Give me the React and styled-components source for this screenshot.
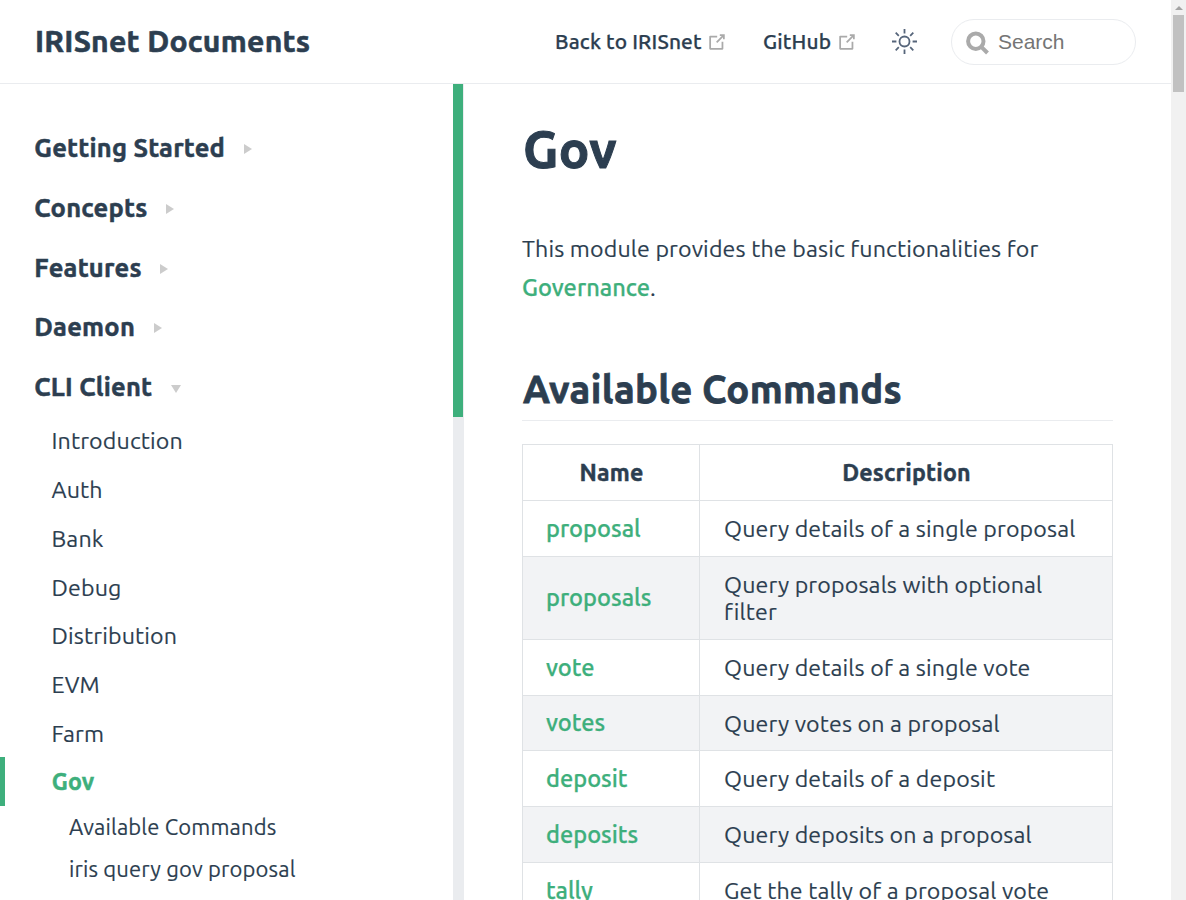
import React from "react";
import styled, { createGlobalStyle, css } from "styled-components";

const GlobalStyle = createGlobalStyle`
  * { box-sizing: border-box; }
  html, body { margin: 0; height: 900px; overflow: hidden; background: #fff; }
  body {
    font-family: Ubuntu, "Noto Sans", "Open Sans", sans-serif;
    color: #2c3e50;
    font-size: 23.2px;
    letter-spacing: 0.14px;
    -webkit-text-stroke: 0.15px currentColor;
  }
  a { color: inherit; text-decoration: none; }
`;

const strong = css`
  font-weight: 700;
  letter-spacing: 0.009em;
  -webkit-text-stroke: 0.02em currentColor;
`;

const Window = styled.div`
  display: flex;
  width: 1186px;
  height: 900px;
  overflow: hidden;
`;

const Page = styled.div`
  display: flex;
  flex-direction: column;
  width: 1171px;
  height: 900px;
`;

const Label = styled.span`
  white-space: nowrap;
`;

const Header = styled.header`
  display: flex;
  align-items: center;
  height: 84px;
  flex: none;
  padding: 0 35px;
  border-bottom: 1px solid #eaecef;
`;

const SiteName = styled.a`
  ${strong}
  flex: 1;
  font-size: 30.2px;
  line-height: 40px;
  margin-top: -2px;
  letter-spacing: 0.23px;
`;

const NavLink = styled.a`
  display: flex;
  align-items: center;
  width: ${(p) => p.$width}px;
  margin-right: ${(p) => p.$gap}px;
  font-size: 20.9px;
  font-weight: 500;
  line-height: 30px;
  justify-content: space-between;
  -webkit-text-stroke: 0.25px currentColor;
`;

const ThemeButton = styled.span`
  display: flex;
  margin-right: 33px;
`;

const SearchBox = styled.label`
  display: flex;
  align-items: center;
  gap: 7px;
  width: 185px;
  height: 46px;
  padding-left: 13px;
  border: 1px solid #eaecef;
  border-radius: 23px;
  color: #757575;
  font: 21px "Liberation Sans", Arial, sans-serif;
  letter-spacing: 0;
  -webkit-text-stroke: 0;
`;

const Body = styled.div`
  display: flex;
  height: 816px;
  overflow: hidden;
`;

const Sidebar = styled.nav`
  flex: 1 0 453px;
  width: 453px;
  padding-top: 34px;
  overflow: hidden;
`;

const SideTrack = styled.div`
  flex: none;
  width: 11px;
  height: 816px;
  background: #eaecef;
`;

const SideThumb = styled.div`
  width: 10px;
  height: 333px;
  background: #3eaf7c;
`;

const Group = styled.div`
  ${strong}
  display: flex;
  align-items: center;
  height: 59.7px;
  padding-left: 34.3px;
  font-size: 25.5px;
`;

const Arrow = styled.i`
  width: 0;
  height: 0;
  margin: ${(p) => (p.$open ? "4px 0 0 18.7px" : "3px 0 0 18.7px")};
  border: 5px solid transparent;
  ${(p) =>
    p.$open
      ? "border-top: 8px solid #ccc; border-bottom: 0;"
      : "border-left: 8px solid #ccc; border-right: 0;"}
`;

const Items = styled.div`
  margin-top: -0.5px;
`;

const Item = styled.a`
  display: flex;
  align-items: center;
  height: 48.75px;
  padding-left: 51.5px;
`;

const ActiveItem = styled(Item)`
  ${strong}
  padding-left: 46.7px;
  padding-bottom: 2px;
  border-left: 5px solid #3eaf7c;
  color: #3eaf7c;
`;

const SubItem = styled.a`
  display: flex;
  align-items: center;
  height: 42px;
  padding-left: 69px;
  font-size: 22px;
`;

const Content = styled.main`
  flex: none;
  width: 707px;
  padding: 0 58px;
  overflow: hidden;
`;

const Title = styled.h1`
  ${strong}
  margin: 30px 0 0;
  padding-left: 1px;
  font-size: 51px;
  line-height: 70px;
`;

const Intro = styled.p`
  margin: 45px 0 0;
  line-height: 38.5px;
`;

const Link = styled.a`
  color: #3eaf7c;
  font-size: 23.6px;
  font-weight: 500;
  letter-spacing: 0;
  -webkit-text-stroke: 0.25px currentColor;
`;

const Subtitle = styled.h2`
  ${strong}
  margin: 55px 0 23px;
  padding-left: 1px;
  height: 60px;
  border-bottom: 1px solid #eaecef;
  font-size: 38.3px;
  line-height: 56px;
  letter-spacing: 0.3px;
`;

const Table = styled.div`
  width: 591px;
  border: 1px solid #dfe2e5;
  border-bottom: 0;
`;

const Row = styled.div`
  display: flex;
  height: ${(p) => p.$height}px;
  background: ${(p) => (p.$shaded ? "#f2f3f5" : "#fff")};
  border-bottom: 1px solid #dfe2e5;
  ${(p) => p.$head && strong}
`;

const Cell = styled.div`
  display: flex;
  flex-direction: column;
  justify-content: center;
  align-items: ${(p) => (p.$center ? "center" : "flex-start")};
  width: ${(p) => (p.$name ? 177 : 412)}px;
  padding: ${(p) => (p.$center ? "0 0 0 1px" : p.$name ? "0 23px 1px" : "0 24px")};
  border-right: ${(p) => (p.$name ? "1px solid #dfe2e5" : "0")};
  line-height: 27px;
`;

const PageTrack = styled.div`
  display: flex;
  flex-direction: column;
  align-items: center;
  width: 15px;
  height: 900px;
  background: #f1f1f1;
`;

const UpArrow = styled.i`
  margin: 6px 0 5px;
  border: 4px solid transparent;
  border-top: 0;
  border-bottom-color: #a3a3a3;
`;

const PageThumb = styled.div`
  width: 11px;
  height: 77px;
  background: #c1c1c1;
`;

const Outbound = () => (
  <svg width="22" height="22" viewBox="0 0 100 100" fill="#aaa">
    <path d="M18.8,85.1h56c2.2,0,4-1.8,4-4v-32h-8v28h-48v-48h28v-8h-32c-2.2,0-4,1.8-4,4v56C14.8,83.3,16.6,85.1,18.8,85.1z" />
    <path d="M45.7,48.7 51.3,54.3 77.2,28.5 77.2,37.2 85.2,37.2 85.2,14.9 62.8,14.9 62.8,22.9 71.5,22.9z" />
  </svg>
);

const Sun = () => (
  <svg width="27" height="27" viewBox="0 0 27 27" fill="none" stroke="#56657a" strokeWidth="1.8">
    <circle cx="13.5" cy="13.5" r="5" />
    <path d="M13.5 1v4.4M13.5 21.6V26M1 13.5h4.4M21.6 13.5H26M4.7 4.7l3.1 3.1M19.2 19.2l3.1 3.1M4.7 22.3l3.1-3.1M19.2 7.8l3.1-3.1" />
  </svg>
);

const Magnifier = () => (
  <svg width="26" height="26" viewBox="0 0 26 26" fill="none" stroke="#aaa" strokeWidth="4">
    <circle cx="10.8" cy="12.2" r="7.7" />
    <path d="M16.3 17.8l6.2 6.2" />
  </svg>
);

const groups = ["Getting Started", "Concepts", "Features", "Daemon", "CLI Client"];

const items = ["Introduction", "Auth", "Bank", "Debug", "Distribution", "EVM", "Farm"];

const subItems = ["Available Commands", "iris query gov proposal"];

const rows = [
  { name: "proposal", lines: ["Query details of a single proposal"], height: 56 },
  { name: "proposals", lines: ["Query proposals with optional", "filter"], height: 83 },
  { name: "vote", lines: ["Query details of a single vote"], height: 56 },
  { name: "votes", lines: ["Query votes on a proposal"], height: 55 },
  { name: "deposit", lines: ["Query details of a deposit"], height: 56 },
  { name: "deposits", lines: ["Query deposits on a proposal"], height: 56 },
  { name: "tally", lines: ["Get the tally of a proposal vote"], height: 56 },
];

export default function App() {
  return (
    <Window>
      <GlobalStyle />
      <Page>
        <Header>
          <SiteName><Label>IRISnet Documents</Label></SiteName>
          <NavLink $width={173} $gap={35}><Label>Back to IRISnet</Label><Outbound /></NavLink>
          <NavLink $width={95} $gap={33}><Label>GitHub</Label><Outbound /></NavLink>
          <ThemeButton><Sun /></ThemeButton>
          <SearchBox><Magnifier /><span>Search</span></SearchBox>
        </Header>
        <Body>
          <Sidebar>
            {groups.map((text) => (
              <Group key={text}>
                <Label>{text}</Label>
                <Arrow $open={text === "CLI Client"} />
              </Group>
            ))}
            <Items>
              {items.map((text) => (
                <Item key={text}><Label>{text}</Label></Item>
              ))}
              <ActiveItem><Label>Gov</Label></ActiveItem>
              {subItems.map((text) => (
                <SubItem key={text}><Label>{text}</Label></SubItem>
              ))}
            </Items>
          </Sidebar>
          <SideTrack><SideThumb /></SideTrack>
          <Content>
            <Title><Label>Gov</Label></Title>
            <Intro>
              <Label>This module provides the basic functionalities for</Label><br />
              <Link><Label>Governance</Label></Link>.
            </Intro>
            <Subtitle><Label>Available Commands</Label></Subtitle>
            <Table>
              <Row $head $height={56}>
                <Cell $name $center><Label>Name</Label></Cell>
                <Cell $center><Label>Description</Label></Cell>
              </Row>
              {rows.map(({ name, lines, height }, i) => (
                <Row key={name} $height={height} $shaded={i % 2 === 1}>
                  <Cell $name><Link><Label>{name}</Label></Link></Cell>
                  <Cell>
                    {lines.map((text) => (
                      <Label key={text}>{text}</Label>
                    ))}
                  </Cell>
                </Row>
              ))}
            </Table>
          </Content>
        </Body>
      </Page>
      <PageTrack><UpArrow /><PageThumb /></PageTrack>
    </Window>
  );
}
